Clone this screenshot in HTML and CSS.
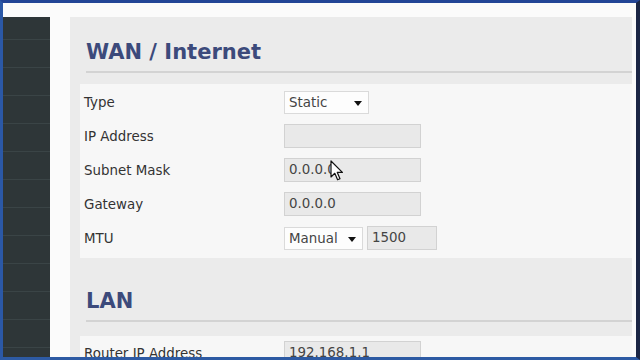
FILE: index.html
```html
<!DOCTYPE html>
<html>
<head>
<meta charset="utf-8">
<link rel="stylesheet" href="styles.css">
</head>
<body>
<div class="frame">
  <div class="topstrip"></div>
  <div class="main-row">
    <nav class="sidebar"></nav>
    <div class="gutter"></div>
    <main class="panel">
      <section class="section">
        <h2 class="sec-title">WAN / Internet</h2>
        <div class="box">
          <div class="row"><span class="label">Type</span><div class="select sel-type">Static<span class="caret"></span></div></div>
          <div class="row"><span class="label">IP Address</span><div class="input"></div></div>
          <div class="row"><span class="label">Subnet Mask</span><div class="input">0.0.0.0</div></div>
          <div class="row"><span class="label">Gateway</span><div class="input">0.0.0.0</div></div>
          <div class="row"><span class="label">MTU</span><div class="select sel-mtu">Manual<span class="caret"></span></div><div class="input input-mtu">1500</div></div>
        </div>
      </section>
      <section class="section lan">
        <h2 class="sec-title">LAN</h2>
        <div class="box">
          <div class="row"><span class="label">Router IP Address</span><div class="input">192.168.1.1</div></div>
        </div>
      </section>
    </main>
  </div>
</div>
<svg class="cursor" width="14" height="22" viewBox="0 0 14 22">
  <path d="M1 1 L1 17 L4.8 13.3 L7.6 19.8 L10 18.8 L7.3 12.4 L12.4 12.4 Z" fill="#fff" stroke="#111" stroke-width="1.2" stroke-linejoin="round"/>
</svg>
</body>
</html>
```

FILE: styles.css
```css
html, body {
  margin: 0;
  padding: 0;
}
body {
  width: 640px;
  height: 360px;
  overflow: hidden;
  position: relative;
  font-family: "DejaVu Sans", Verdana, sans-serif;
  background: #fafafa;
}
.frame {
  width: 640px;
  height: 360px;
  box-sizing: border-box;
  border-top: 3px solid #234596;
  border-left: 3px solid #2b58a6;
  border-right: 4px solid #1b2645;
  border-bottom: 3px solid #2d5aa3;
  background: #fafafa;
  display: flex;
  flex-direction: column;
  overflow: hidden;
}
.topstrip {
  height: 14px;
  flex: none;
  background: #fbfbfb;
}
.main-row {
  flex: 1;
  display: flex;
  min-height: 0;
}
.sidebar {
  width: 47px;
  flex: none;
  background-color: #2e3638;
  background-image: repeating-linear-gradient(to bottom, transparent 0 27px, #3a4446 27px 28px);
  background-position: 0 -5px;
}
.gutter {
  width: 20px;
  flex: none;
  background: #fbfbfb;
}
.panel {
  flex: 1;
  margin-right: 4px;
  background: #ebebeb;
  padding-top: 20px;
  overflow: hidden;
}
.sec-title {
  margin: 0 0 0 16px;
  font-size: 21px;
  font-weight: bold;
  line-height: 30px;
  padding-bottom: 4px;
  border-bottom: 2px solid #d3d3d3;
  color: #3c4a7b;
}
.box {
  margin: 11px 0 0 10px;
  background: #f7f7f7;
  padding: 1px 0 3px 4px;
}
.lan {
  margin-top: 28px;
}
.lan .box {
  margin-top: 14px;
  padding-top: 0;
}
.row {
  height: 34px;
  display: flex;
  align-items: center;
}
.label {
  width: 200px;
  flex: none;
  font-size: 13.4px;
  color: #333;
}
.input {
  width: 137px;
  height: 24px;
  box-sizing: border-box;
  border: 1px solid #d2d2d2;
  background: #e9e9e9;
  font-size: 13.4px;
  line-height: 22px;
  color: #444;
  padding-left: 4px;
}
.select {
  height: 23px;
  box-sizing: border-box;
  border: 1px solid #dadada;
  background: #fdfdfd;
  font-size: 13.4px;
  line-height: 21px;
  color: #444;
  padding-left: 4px;
  position: relative;
}
.sel-type {
  width: 85px;
}
.sel-mtu {
  width: 79px;
}
.caret {
  position: absolute;
  right: 6px;
  top: 9px;
  width: 0;
  height: 0;
  border-left: 4px solid transparent;
  border-right: 4px solid transparent;
  border-top: 5px solid #111;
}
.input-mtu {
  width: 70px;
  margin-left: 4px;
}
.cursor {
  position: absolute;
  left: 330px;
  top: 160px;
}
```
